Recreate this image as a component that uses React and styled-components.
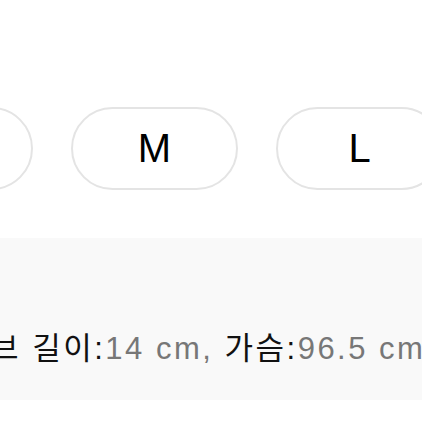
import React from "react";
import styled, { createGlobalStyle } from "styled-components";

const Global = createGlobalStyle`
  html, body { margin: 0; padding: 0; background: #fff; }
  body { width: 422px; height: 422px; overflow: hidden; font-family: "Liberation Sans", "Noto Sans CJK KR", sans-serif; }
`;

const Page = styled.div`
  width: 422px;
  height: 422px;
  overflow: hidden;
  display: flex;
  flex-direction: column;
`;

const SizeRow = styled.div`
  display: flex;
  gap: 38px;
  margin-top: 107px;
  margin-left: -134px;
`;

const SizeButton = styled.button`
  flex: 0 0 167px;
  height: 83px;
  border: 2px solid #e4e4e4;
  border-radius: 42px;
  background: #fff;
  color: #000;
  font-family: "Liberation Sans", sans-serif;
  font-size: 40px;
  display: flex;
  align-items: center;
  justify-content: center;
  padding: 0;
`;

const InfoPanel = styled.div`
  margin-top: 48px;
  height: 162px;
  background: #f9f9f9;
  display: flex;
  align-items: center;
  overflow: hidden;
`;

const InfoLine = styled.div`
  white-space: nowrap;
  font-size: 31px;
  margin-left: -72px;
  margin-top: 52px;
  letter-spacing: 2.5px;
`;

const Label = styled.span`
  color: #111;
`;

const Value = styled.span`
  color: #777;
`;

export default function App() {
  return (
    <>
      <Global />
      <Page>
        <SizeRow>
          {["S", "M", "L", "XL"].map((s) => (
            <SizeButton key={s}>{s}</SizeButton>
          ))}
        </SizeRow>
        <InfoPanel>
          <InfoLine>
            <Label>슬리브 길이:</Label>
            <Value>14 cm, </Value>
            <Label>가슴:</Label>
            <Value>96.5 cm</Value>
          </InfoLine>
        </InfoPanel>
      </Page>
    </>
  );
}
